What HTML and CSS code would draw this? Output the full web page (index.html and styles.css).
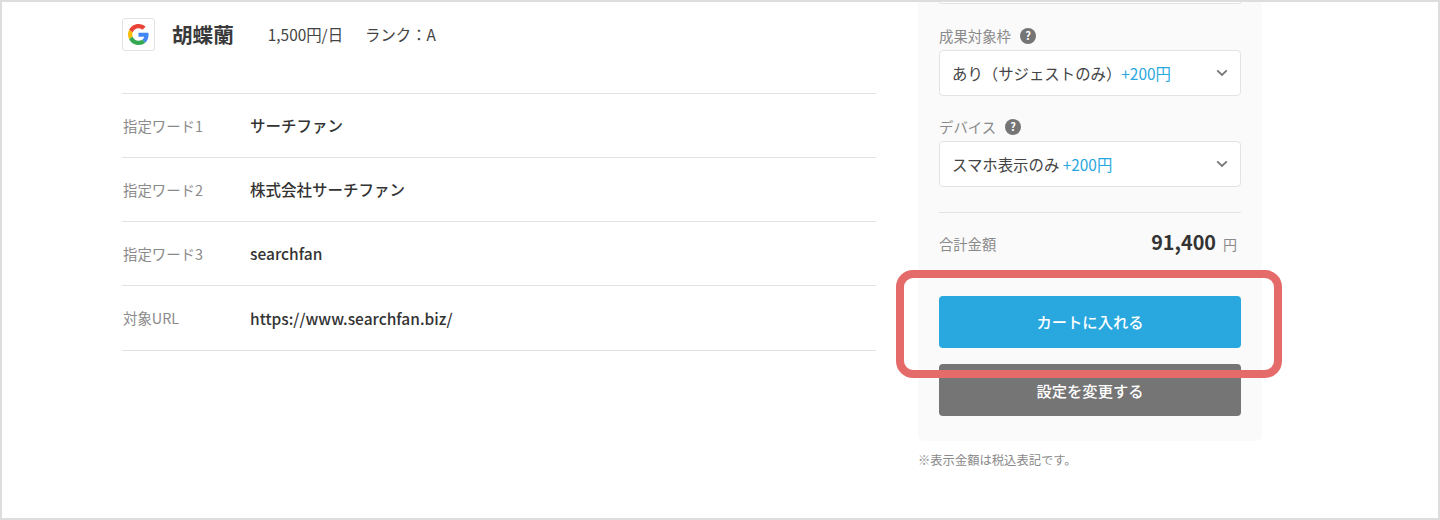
FILE: index.html
```html
<!DOCTYPE html>
<html lang="ja">
<head>
<meta charset="utf-8">
<title>カート</title>
<link rel="stylesheet" href="styles.css">
</head>
<body>
<div class="frame">
  <main class="left">
    <header class="head">
      <span class="engine">
        <svg width="21" height="21" viewBox="0 0 48 48">
          <path fill="#EA4335" d="M24 9.5c3.54 0 6.71 1.22 9.21 3.6l6.85-6.85C35.9 2.38 30.47 0 24 0 14.62 0 6.51 5.38 2.56 13.22l7.98 6.19C12.43 13.72 17.74 9.5 24 9.5z"/>
          <path fill="#4285F4" d="M46.98 24.55c0-1.57-.15-3.09-.38-4.55H24v9.02h12.94c-.58 2.96-2.26 5.48-4.78 7.18l7.73 6c4.51-4.18 7.09-10.36 7.09-17.65z"/>
          <path fill="#FBBC05" d="M10.53 28.59c-.48-1.45-.76-2.99-.76-4.59s.27-3.14.76-4.59l-7.98-6.19C.92 16.46 0 20.12 0 24c0 3.88.92 7.54 2.56 10.78l7.97-6.19z"/>
          <path fill="#34A853" d="M24 48c6.48 0 11.93-2.13 15.89-5.81l-7.73-6c-2.15 1.45-4.92 2.3-8.16 2.3-6.26 0-11.57-4.22-13.47-9.91l-7.98 6.19C6.51 42.62 14.62 48 24 48z"/>
        </svg>
      </span>
      <h1 class="name">胡蝶蘭</h1>
      <span class="meta price">1,500円/日</span>
      <span class="meta">ランク：A</span>
    </header>
    <dl class="table">
      <div class="row"><dt>指定ワード1</dt><dd>サーチファン</dd></div>
      <div class="row"><dt>指定ワード2</dt><dd>株式会社サーチファン</dd></div>
      <div class="row"><dt>指定ワード3</dt><dd>searchfan</dd></div>
      <div class="row"><dt>対象URL</dt><dd>https://www.searchfan.biz/</dd></div>
    </dl>
  </main>
  <aside class="side">
    <div class="panel">
      <div class="stub"></div>
      <div class="label first">成果対象枠<span class="help">?</span></div>
      <div class="select">
        <span>あり（サジェストのみ）<em>+200円</em></span>
        <svg class="chev" width="12" height="8" viewBox="0 0 12 8"><path d="M1.2 1.4 6 6l4.8-4.6" fill="none" stroke="#777" stroke-width="1.8"/></svg>
      </div>
      <div class="label second">デバイス<span class="help">?</span></div>
      <div class="select">
        <span>スマホ表示のみ <em>+200円</em></span>
        <svg class="chev" width="12" height="8" viewBox="0 0 12 8"><path d="M1.2 1.4 6 6l4.8-4.6" fill="none" stroke="#777" stroke-width="1.8"/></svg>
      </div>
      <div class="total">
        <span class="total-label">合計金額</span>
        <span class="total-value"><strong>91,400</strong><small>円</small></span>
      </div>
      <button class="btn primary">カートに入れる</button>
      <button class="btn secondary">設定を変更する</button>
    </div>
    <p class="note">※表示金額は税込表記です。</p>
  </aside>
  <div class="highlight"></div>
</div>
</body>
</html>
```
FILE: styles.css
```css
* { box-sizing: border-box; }
html, body { margin: 0; padding: 0; }
body {
  width: 1440px;
  height: 520px;
  overflow: hidden;
  background: #fff;
  font-family: "Noto Sans CJK JP", "Noto Sans", sans-serif;
  color: #333;
}
.frame {
  position: relative;
  display: flex;
  align-items: flex-start;
  width: 1440px;
  height: 520px;
  padding-left: 120px;
  border: 2px solid #ddd;
  overflow: hidden;
}
.left { width: 754px; padding-top: 16px; }
.head { display: flex; align-items: center; height: 33px; }
.engine {
  display: flex;
  align-items: center;
  justify-content: center;
  width: 33px;
  height: 33px;
  background: #fff;
  border: 1px solid #e3e3e3;
  border-radius: 3px;
}
.name {
  margin: 0 0 0 17px;
  font-size: 20.6px;
  font-weight: 700;
  line-height: 33px;
  color: #3a3a3a;
}
.meta { font-size: 15.4px; line-height: 33px; color: #444; margin-left: 22px; }
.price { margin-left: 34px; }
.table { margin: 42px 0 0; border-top: 1px solid #e3e3e3; }
.row {
  display: flex;
  align-items: center;
  height: 64px;
  padding-bottom: 1px;
  border-bottom: 1px solid #e3e3e3;
}
.row:last-child { height: 65px; }
.row dt { width: 128px; font-size: 14.4px; color: #8a8a8a; padding-left: 1px; }
.row dd { margin: 0; font-size: 15.5px; font-weight: 500; color: #333; }
.side { width: 344px; margin-left: 42px; }
.panel {
  height: 439px;
  padding: 0 21px;
  background: #fafafa;
  border-radius: 0 0 6px 6px;
}
.stub {
  height: 2px;
  background: #fff;
  border: 1px solid #e3e3e3;
  border-top: 0;
  border-radius: 0 0 4px 4px;
}
.label {
  display: flex;
  align-items: center;
  height: 20px;
  font-size: 14.4px;
  color: #8a8a8a;
}
.first { margin-top: 21px; margin-bottom: 5px; }
.second { margin-top: 20px; margin-bottom: 5px; }
.help {
  display: inline-flex;
  align-items: center;
  justify-content: center;
  width: 16px;
  height: 16px;
  margin-left: 9px;
  margin-top: 1px;
  border-radius: 50%;
  background: #757575;
  color: #fff;
  font-size: 11px;
  font-weight: 700;
  line-height: 1;
}
.select {
  display: flex;
  align-items: center;
  justify-content: space-between;
  height: 46px;
  padding: 0 13px 1px 12px;
  background: #fff;
  border: 1px solid #e3e3e3;
  border-radius: 4px;
  font-size: 15.4px;
  color: #444;
}
.select em { font-style: normal; color: #29a8e0; }
.chev { flex: none; margin-right: -1px; }
.total {
  display: flex;
  align-items: center;
  justify-content: space-between;
  height: 60px;
  margin: 25px 0 24px;
  padding-right: 4px;
  border-top: 1px solid #e3e3e3;
}
.total-label { font-size: 14.3px; color: #8a8a8a; padding-top: 2px; }
.total-value { display: flex; align-items: baseline; margin-top: -2px; }
.total-value strong { font-size: 19.8px; font-weight: 700; color: #333; }
.total-value small { margin-left: 7px; font-size: 14px; color: #8a8a8a; }
.btn {
  display: block;
  width: 100%;
  height: 52px;
  padding: 0;
  border: 0;
  border-radius: 4px;
  color: #fff;
  font-family: inherit;
  font-size: 15.3px;
  font-weight: 500;
}
.primary { background: #29a8e0; margin-bottom: 16px; padding-bottom: 2px; }
.secondary { background: #757575; }
.note { margin: 10px 0 0; font-size: 12.3px; line-height: 18px; color: #8a8a8a; }
.highlight {
  position: absolute;
  left: 894px;
  top: 268px;
  width: 386px;
  height: 108px;
  border: 8px solid #e56a6a;
  border-radius: 17px;
}
```
